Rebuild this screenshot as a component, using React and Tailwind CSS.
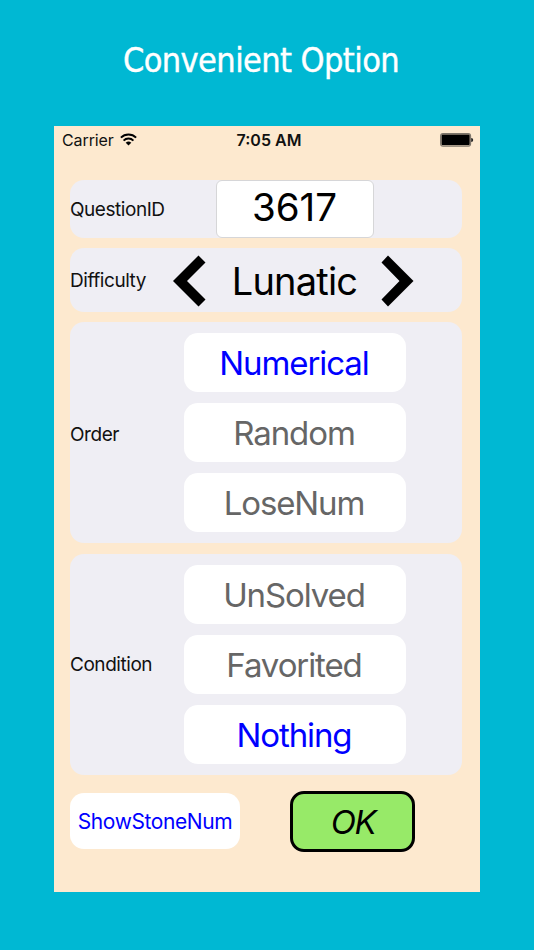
import React from "react";

function Card({ label, labelClass, className, children }) {
  return (
    <section className={`flex w-[392px] shrink-0 items-center rounded-[14px] bg-[#efeef4] ${className}`}>
      <h2 className={`shrink-0 text-[19px] tracking-[-0.45px] text-[#111] ${labelClass}`}>{label}</h2>
      {children}
    </section>
  );
}

function Choice({ selected, children }) {
  return (
    <button
      className={`flex h-[59px] w-[222px] items-center justify-center rounded-[14px] bg-white pr-[2px] pt-[3px] text-[33px] tracking-[-1.1px] ${
        selected ? "text-[#0000ff]" : "text-[#666]"
      }`}
    >
      {children}
    </button>
  );
}

function Wifi() {
  return (
    <svg className="mb-px ml-[6px] h-[13px] w-[17px]" viewBox="0 0 17 13" fill="none" stroke="#000" strokeWidth="2">
      <path d="M.9 4.6A10.8 10.8 0 0 1 16.1 4.6M3.6 7.6A6.9 6.9 0 0 1 13.4 7.6" />
      <path d="M8.5 12.6L5.7 9.8A4 4 0 0 1 11.3 9.8Z" fill="#000" stroke="none" />
    </svg>
  );
}

function Battery() {
  return (
    <svg className="h-[14px] w-[34px]" viewBox="0 0 34 14">
      <rect x=".6" y=".6" width="30" height="12.6" rx="2.4" fill="none" stroke="#7d756a" strokeWidth="1.1" />
      <rect x="1.5" y="1.5" width="28.2" height="10.8" rx="1.2" fill="#000" />
      <path d="M31.2 4.9a2 2 0 0 1 0 4z" fill="#222" />
    </svg>
  );
}

export default function App() {
  return (
    <main className="flex h-[950px] w-[534px] flex-col items-center overflow-hidden bg-[#00b8d3] font-['Inter','Liberation_Sans',sans-serif]">
      <h1 className="mt-[35px] h-[91px] whitespace-nowrap pr-[12px] font-['DejaVu_Sans_Condensed','DejaVu_Sans',sans-serif] text-[34px] leading-[50px] tracking-[-0.6px] text-white [-webkit-text-stroke:0.4px_white]">
        Convenient Option
      </h1>
      <div className="flex h-[766px] w-[426px] flex-col bg-[#fde9cf] pl-[16px]">
        <header className="-ml-[16px] grid h-[28px] shrink-0 grid-cols-3 items-center pl-[8px] pr-[6px] text-[16px] text-[#111]">
          <div className="flex items-center">
            <span className="tracking-[-0.1px]">Carrier</span>
            <Wifi />
          </div>
          <span className="pl-[2px] text-center font-semibold">7:05 AM</span>
          <div className="flex justify-end">
            <Battery />
          </div>
        </header>

        <Card label="QuestionID" labelClass="pt-[2px]" className="relative mt-[26px] h-[57.5px]">
          <div className="absolute left-[146px] top-0 flex h-[57.5px] w-[158px] items-center justify-center rounded-[6px] border border-[#d6d6d8] bg-white pb-px pr-px text-[38.5px] text-black">
            3617
          </div>
        </Card>

        <Card label="Difficulty" labelClass="pt-[2px]" className="mt-[10.5px] h-[63.5px]">
          <div className="ml-auto mr-[48px] flex h-full items-center">
            <svg className="mt-[2px] h-[52px] w-[33px]" viewBox="0 0 33 52">
              <path d="M0 26L25.5 .5L32.5 7.5L14 26L32.5 44.5L25.5 51.5Z" />
            </svg>
            <span className="flex w-[175px] justify-center pl-[2px] pt-[4px] text-[38px] tracking-[-0.8px] text-black">Lunatic</span>
            <svg className="mt-[2px] h-[52px] w-[33px]" viewBox="0 0 33 52">
              <path d="M32.5 26L7 .5L.5 7.5L18.5 26L.5 44.5L7 51.5Z" />
            </svg>
          </div>
        </Card>

        <Card label="Order" labelClass="pt-[6px]" className="mt-[10.5px] h-[221px]">
          <div className="ml-auto mr-[56px] flex flex-col gap-[11px]">
            <Choice selected>Numerical</Choice>
            <Choice>Random</Choice>
            <Choice>LoseNum</Choice>
          </div>
        </Card>

        <Card label="Condition" labelClass="pt-[3px]" className="mt-[10.5px] h-[221px]">
          <div className="ml-auto mr-[56px] flex flex-col gap-[11px] pt-px">
            <Choice>UnSolved</Choice>
            <Choice>Favorited</Choice>
            <Choice selected>Nothing</Choice>
          </div>
        </Card>

        <footer className="mt-[16px] flex items-center">
          <button className="flex h-[56px] w-[170px] items-center justify-center rounded-[14px] bg-white pt-px text-[21px] tracking-[-0.4px] text-[#0000ff]">
            ShowStoneNum
          </button>
          <button className="ml-[50px] flex h-[61px] w-[125px] items-center justify-center rounded-[14px] border-[3px] border-black bg-[#97ea68] pl-px pt-[3px] text-[33px] italic tracking-[-1.5px] text-black">
            OK
          </button>
        </footer>
      </div>
    </main>
  );
}
